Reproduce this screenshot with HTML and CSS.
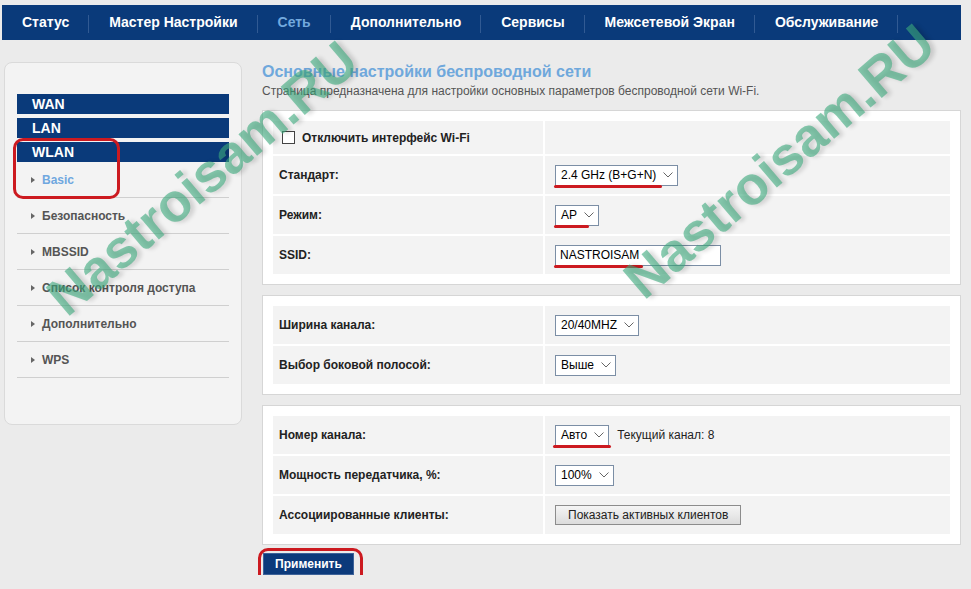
FILE: index.html
```html
<!DOCTYPE html>
<html lang="ru">
<head>
    <meta charset="UTF-8">
    <meta name="viewport" content="width=device-width, initial-scale=1.0">
    <title>Сеть - WLAN Basic</title>
    <link rel="stylesheet" href="styles.css">
</head>
<body>

<div class="page">
    <ul class="topnav">
        <li>Статус</li>
        <li>Мастер Настройки</li>
        <li class="active">Сеть</li>
        <li>Дополнительно</li>
        <li>Сервисы</li>
        <li>Межсетевой Экран</li>
        <li>Обслуживание</li>
    </ul>

    <div class="layout">
        <div class="sidebar">
            <div class="menu-head">WAN</div>
            <div class="menu-head">LAN</div>
            <div class="menu-head">WLAN</div>
            <ul class="submenu">
                <li class="current"><span class="arrow"></span>Basic</li>
                <li><span class="arrow"></span>Безопасность</li>
                <li><span class="arrow"></span>MBSSID</li>
                <li><span class="arrow"></span>Список контроля доступа</li>
                <li><span class="arrow"></span>Дополнительно</li>
                <li><span class="arrow"></span>WPS</li>
            </ul>
            <span class="callout callout-menu"></span>
        </div>

        <div class="main">
            <h1>Основные настройки беспроводной сети</h1>
            <p class="lead">Страница предназначена для настройки основных параметров беспроводной сети Wi-Fi.</p>

            <div class="box">
                <div class="row row-short">
                    <div class="label label-check"><span class="checkbox"></span>Отключить интерфейс Wi-Fi</div>
                    <div class="value"></div>
                </div>
                <div class="row">
                    <div class="label">Стандарт:</div>
                    <div class="value">
                        <span class="marked">
                            <span class="select">2.4 GHz (B+G+N)<svg class="chev" viewBox="0 0 10 6"><polyline points="0.5,0.5 5,5 9.5,0.5"/></svg></span>
                            <span class="underline ul-std"></span>
                        </span>
                    </div>
                </div>
                <div class="row">
                    <div class="label">Режим:</div>
                    <div class="value">
                        <span class="marked">
                            <span class="select">AP<svg class="chev" viewBox="0 0 10 6"><polyline points="0.5,0.5 5,5 9.5,0.5"/></svg></span>
                            <span class="underline ul-mode"></span>
                        </span>
                    </div>
                </div>
                <div class="row">
                    <div class="label">SSID:</div>
                    <div class="value">
                        <span class="marked">
                            <span class="textbox">NASTROISAM</span>
                            <span class="underline ul-ssid"></span>
                        </span>
                    </div>
                </div>
            </div>

            <div class="box">
                <div class="row">
                    <div class="label">Ширина канала:</div>
                    <div class="value">
                        <span class="select">20/40MHZ<svg class="chev" viewBox="0 0 10 6"><polyline points="0.5,0.5 5,5 9.5,0.5"/></svg></span>
                    </div>
                </div>
                <div class="row">
                    <div class="label">Выбор боковой полосой:</div>
                    <div class="value">
                        <span class="select">Выше<svg class="chev" viewBox="0 0 10 6"><polyline points="0.5,0.5 5,5 9.5,0.5"/></svg></span>
                    </div>
                </div>
            </div>

            <div class="box">
                <div class="row">
                    <div class="label">Номер канала:</div>
                    <div class="value">
                        <span class="marked">
                            <span class="select">Авто<svg class="chev" viewBox="0 0 10 6"><polyline points="0.5,0.5 5,5 9.5,0.5"/></svg></span>
                            <span class="underline ul-chan"></span>
                        </span>
                        <span class="note">Текущий канал: 8</span>
                    </div>
                </div>
                <div class="row">
                    <div class="label">Мощность передатчика, %:</div>
                    <div class="value">
                        <span class="select">100%<svg class="chev" viewBox="0 0 10 6"><polyline points="0.5,0.5 5,5 9.5,0.5"/></svg></span>
                    </div>
                </div>
                <div class="row">
                    <div class="label">Ассоциированные клиенты:</div>
                    <div class="value">
                        <button class="btn-clients">Показать активных клиентов</button>
                    </div>
                </div>
            </div>

            <div class="apply-wrap">
                <button class="btn-apply">Применить</button>
                <span class="callout callout-apply"></span>
            </div>
        </div>
    </div>
</div>

<span class="wm wm-left">Nastroisam.RU</span>
<span class="wm wm-right">Nastroisam.RU</span>

</body>
</html>
```

FILE: styles.css
```css
body {
    margin: 0;
    background: #ebebeb;
    font-family: 'Liberation Sans', Arial, sans-serif;
    font-size: 12px;
    color: #222;
    overflow: hidden;
}
.page {
    width: 959px;
    margin-left: 2px;
    padding-top: 5px;
}

/* top menu */
.topnav {
    display: flex;
    height: 35px;
    margin: 0;
    padding: 0;
    list-style: none;
    background: #0a3a7a;
}
.topnav li {
    position: relative;
    padding: 0 20px;
    line-height: 35px;
    color: #fff;
    font-weight: bold;
    font-size: 14px;
}
.topnav li::after {
    content: '';
    position: absolute;
    right: 0;
    top: 10px;
    width: 1px;
    height: 18px;
    background: #315a93;
}
.topnav li.active {
    color: #72a9de;
}

.layout {
    display: flex;
    align-items: flex-start;
    gap: 20px;
    margin-top: 22px;
}

/* left menu */
.sidebar {
    position: relative;
    width: 238px;
    box-sizing: border-box;
    margin-left: 2px;
    padding: 31px 12px 46px 12px;
    background: #f3f3f3;
    border: 1px solid #dadada;
    border-radius: 8px;
}
.menu-head {
    height: 20px;
    line-height: 20px;
    margin-bottom: 4px;
    padding-left: 15px;
    background: #0a3a7a;
    color: #fff;
    font-weight: bold;
    font-size: 14px;
}
.menu-head:nth-child(3) {
    margin-bottom: 0;
}
.submenu {
    margin: 0;
    padding: 0;
    list-style: none;
}
.submenu li {
    display: flex;
    align-items: center;
    gap: 7px;
    height: 35px;
    padding-left: 14px;
    border-bottom: 1px solid #cfcfcf;
    color: #555;
    font-weight: bold;
}
.submenu li.current {
    color: #6fa7df;
}
.arrow {
    width: 0;
    height: 0;
    border-top: 3px solid transparent;
    border-bottom: 3px solid transparent;
    border-left: 4px solid #666;
}

/* red marks */
.callout {
    position: absolute;
    box-sizing: border-box;
    border: 3px solid #cc1a20;
    border-radius: 10px;
    pointer-events: none;
}
.callout-menu {
    left: 8px;
    top: 75px;
    width: 107px;
    height: 61px;
}
.callout-apply {
    left: -5px;
    top: -5px;
    right: -9px;
    bottom: -10px;
}

/* main */
.main {
    width: 699px;
}
.main h1 {
    margin: 0;
    font-size: 16px;
    line-height: 20px;
    color: #6fa8dc;
}
.lead {
    margin: 2px 0 0;
    line-height: 14px;
    color: #555;
}
.box {
    display: grid;
    gap: 2px;
    margin-top: 10px;
    padding: 10px;
    background: #fff;
    border: 1px solid #d6d6d6;
}
.lead + .box {
    margin-top: 12px;
}
.row {
    display: grid;
    grid-template-columns: 270px 1fr;
    column-gap: 2px;
    height: 38px;
}
.row-short {
    height: 33px;
}
.label, .value {
    display: flex;
    align-items: center;
    background: #f3f3f3;
}
.label {
    padding-left: 6px;
    font-weight: bold;
}
.label-check {
    padding-left: 9px;
    gap: 7px;
}
.value {
    padding-left: 10px;
}
.checkbox {
    width: 13px;
    height: 13px;
    box-sizing: border-box;
    border: 1px solid #444;
    background: #fff;
}
.marked {
    position: relative;
    display: inline-flex;
}
.select {
    display: inline-flex;
    align-items: center;
    gap: 7px;
    height: 21px;
    box-sizing: border-box;
    padding: 0 4px 0 5px;
    border: 1px solid #7b8ea5;
    background: #fff;
    color: #000;
}
.chev {
    width: 10px;
    height: 6px;
    fill: none;
    stroke: #666;
    stroke-width: 1;
}
.textbox {
    display: inline-flex;
    align-items: center;
    width: 166px;
    height: 21px;
    box-sizing: border-box;
    padding-left: 4px;
    border: 1px solid #7b8ea5;
    background: #fff;
    color: #000;
}
.underline {
    position: absolute;
    left: -1px;
    bottom: -2px;
    height: 3px;
    border-radius: 2px;
    background: #cc1a20;
}
.ul-std { width: 108px; }
.ul-mode { width: 35px; }
.ul-ssid { width: 89px; }
.ul-chan { left: -2px; width: 58px; }
.note {
    margin-left: 8px;
}
.btn-clients {
    height: 20px;
    padding: 0 12px;
    border: 1px solid #8c8c8c;
    background: linear-gradient(#f5f5f5, #dcdcdc);
    font-family: inherit;
    font-size: 12px;
    color: #222;
}

.apply-wrap {
    position: relative;
    display: inline-block;
    margin-top: 8px;
    margin-left: 1px;
}
.btn-apply {
    display: block;
    width: 91px;
    height: 22px;
    border: 1px solid #3d6299;
    background: #0c3a7b;
    color: #fff;
    font-family: inherit;
    font-weight: bold;
    font-size: 12px;
}

/* site watermark */
.wm {
    position: absolute;
    font-family: 'Liberation Sans', Arial, sans-serif;
    font-weight: bold;
    font-size: 54px;
    line-height: 54px;
    white-space: nowrap;
    color: rgba(60, 170, 125, 0.6);
    text-shadow: 3px 3px 4px rgba(0, 0, 0, 0.15);
    transform-origin: 0 46px;
    transform: rotate(-40.5deg);
    pointer-events: none;
}
.wm-left {
    left: 67px;
    top: 272px;
}
.wm-right {
    left: 644px;
    top: 255px;
}
```
